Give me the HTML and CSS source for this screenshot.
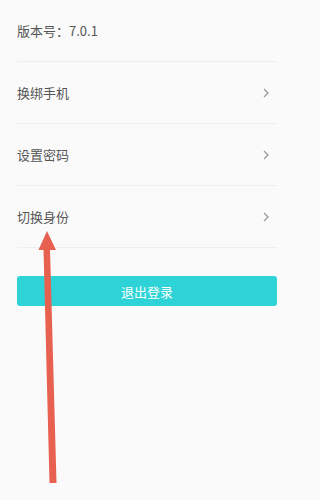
FILE: index.html
```html
<!DOCTYPE html>
<html lang="zh">
<head>
<meta charset="utf-8">
<link rel="stylesheet" href="styles.css">
</head>
<body>
<div class="page">
  <div class="list">
    <div class="row"><span class="label">版本号：7.0.1</span></div>
    <div class="row"><span class="label">换绑手机</span><svg class="chev" viewBox="0 0 6 10"><path d="M1 1 L5 5 L1 9"/></svg></div>
    <div class="row"><span class="label">设置密码</span><svg class="chev" viewBox="0 0 6 10"><path d="M1 1 L5 5 L1 9"/></svg></div>
    <div class="row"><span class="label">切换身份</span><svg class="chev" viewBox="0 0 6 10"><path d="M1 1 L5 5 L1 9"/></svg></div>
  </div>
  <button class="logout">退出登录</button>
</div>
<svg class="arrow" viewBox="0 0 292 500" width="292" height="500">
  <polygon points="43.5,249 50,249 56.5,483 49.5,483"/>
  <polygon points="47,231 38.5,250 56,250"/>
</svg>
</body>
</html>
```
FILE: styles.css
```css
html, body {
  margin: 0;
  padding: 0;
  background: #fafafa;
}
body {
  width: 292px;
  height: 500px;
  overflow: hidden;
  position: relative;
  font-family: "Noto Sans CJK SC", "Noto Sans", sans-serif;
}
.page {
  padding: 0 15px 0 17px;
}
.list {
  display: flex;
  flex-direction: column;
}
.row {
  height: 61px;
  border-bottom: 1px solid #efefef;
  display: flex;
  align-items: center;
  justify-content: space-between;
}
.label {
  font-size: 13px;
  color: #555;
  line-height: 1;
}
.chev {
  width: 6px;
  height: 10px;
  margin-right: 8px;
  fill: none;
  stroke: #9a9a9a;
  stroke-width: 1.3;
}
.logout {
  display: block;
  width: 100%;
  margin-top: 28px;
  height: 30px;
  border: none;
  border-radius: 3px;
  background: #2dd3d6;
  color: #fff;
  font-family: "Noto Sans CJK SC", "Noto Sans", sans-serif;
  font-size: 13px;
  padding: 0;
}
.arrow {
  position: absolute;
  left: 0;
  top: 0;
  fill: #e8604f;
}
```
